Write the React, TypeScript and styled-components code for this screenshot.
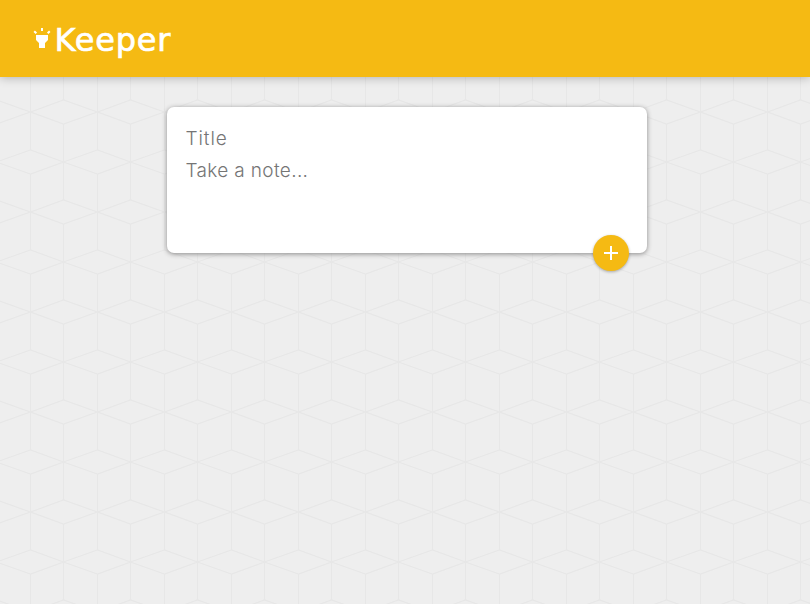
import React from 'react'
import styled, { createGlobalStyle } from 'styled-components'
import { MdAdd, MdHighlight } from 'react-icons/md'

const cubes = encodeURIComponent(
  `<svg xmlns="http://www.w3.org/2000/svg" width="67" height="100" viewBox="0 0 67 100">
    <g fill="none" stroke="#e7e7e7" stroke-width="1.3">
      <path d="M0.5 0L33.5 -12L67.5 0L33.5 12Z"/>
      <path d="M0.5 100L33.5 88L67.5 100L33.5 112Z"/>
      <path d="M33.5 50L0.5 38L-33.5 50L0.5 62Z"/>
      <path d="M33.5 50L67.5 38L100.5 50L67.5 62Z"/>
      <path d="M33.5 12V88M0.5 0V38M0.5 62V100"/>
    </g>
  </svg>`
)

export default function App() {
  return (
    <>
      <GlobalStyle />
      <Header>
        <HighlightIcon />
        <Logo>Keeper</Logo>
      </Header>
      <Main>
        <NoteForm onSubmit={(e) => e.preventDefault()}>
          <TitleInput name="title" placeholder="Title" />
          <ContentInput name="content" placeholder="Take a note..." rows={3} />
          <AddButton type="submit" aria-label="Add">
            <MdAdd size={24} />
          </AddButton>
        </NoteForm>
      </Main>
    </>
  )
}

const GlobalStyle = createGlobalStyle`
  * {
    box-sizing: border-box;
    margin: 0;
    padding: 0;
  }

  html {
    background: #eee url("data:image/svg+xml,${cubes}") 30px 112px;
  }

  body {
    min-height: 100vh;
    font-family: Inter, "Liberation Sans", sans-serif;
  }
`

const Header = styled.header`
  display: flex;
  height: 77px;
  padding: 16px 30px;
  background: #f5ba13;
  box-shadow: 0 0 10px rgba(0, 0, 0, 0.3);
`

const HighlightIcon = styled(MdHighlight)`
  width: 24px;
  height: 24px;
  margin-top: 10px;
  color: #fff;
`

const Logo = styled.h1`
  margin-left: 0.5px;
  color: #fff;
  font-family: "DejaVu Sans", sans-serif;
  font-size: 32px;
  font-weight: 400;
  line-height: 48px;
  letter-spacing: 0.8px;
  -webkit-text-stroke: 0.7px #fff;
`

const Main = styled.main`
  padding: 30px 0 0 167px;
`

const NoteForm = styled.form`
  position: relative;
  display: flex;
  flex-direction: column;
  width: 480px;
  height: 146px;
  padding: 15px;
  background: #fff;
  border-radius: 7px;
  box-shadow: 0 1px 5px rgb(138, 137, 137);
`

const TitleInput = styled.input`
  width: 100%;
  height: 32px;
  padding: 4px 3.5px;
  border: none;
  outline: none;
  font-family: inherit;
  font-size: 19px;
  font-weight: 300;
  letter-spacing: 0.9px;

  &::placeholder {
    color: #757575;
  }
`

const ContentInput = styled(TitleInput).attrs({ as: 'textarea' })<{ rows?: number }>`
  height: 84px;
  padding-top: 5px;
  line-height: 24px;
  letter-spacing: 0.35px;
  resize: none;
`

const AddButton = styled.button`
  position: absolute;
  right: 18px;
  bottom: -18px;
  display: flex;
  align-items: center;
  justify-content: center;
  width: 36px;
  height: 36px;
  border: none;
  border-radius: 50%;
  background: #f5ba13;
  color: #fff;
  box-shadow: 0 1px 3px rgba(0, 0, 0, 0.3);
  cursor: pointer;
`
